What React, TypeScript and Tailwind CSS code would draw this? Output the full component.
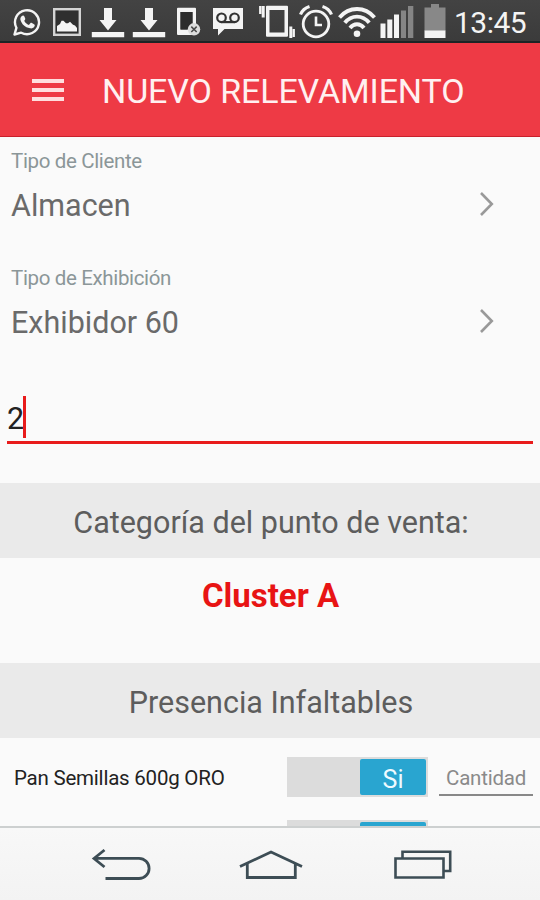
import React, { useState } from 'react'

const StatusBar = () => {
  return (
    <div className="flex h-[43px] shrink-0 items-start border-b-2 border-[#1c2425] bg-linear-to-b from-[#434343] to-[#3b3b3b] text-[#f4f4f4]">
      {/* WhatsApp */}
      <svg className="ml-[13px] mt-2 h-7 w-7 shrink-0" viewBox="0 0 28 28" fill="none">
        <path
          d="M1.5 26.5 3.4 19.8A12 12 0 1 1 8.2 24.7Z"
          stroke="currentColor"
          strokeWidth="2.4"
          strokeLinejoin="round"
        />
        <path
          d="M8.6 8.2c1.2-1.3 2.3-.9 2.8.3l.8 2c.3.8-.2 1.4-1 2.2 1.1 2.1 2.5 3.3 4.7 4.2l1.4-1.6c.5-.6 1-.5 1.6-.2l2.1 1.1c1 .5.9 1 .5 2.1-.6 1.6-2.6 2.4-4.4 2-5.4-1.2-8.4-4.3-9.6-8.4-.4-1.4.1-2.7 1.1-3.7Z"
          fill="currentColor"
        />
      </svg>
      {/* Gallery */}
      <svg className="ml-3 mt-[7px] h-[30px] w-7 shrink-0" viewBox="0 0 28 30" fill="none">
        <rect x="1.2" y="2.2" width="25.6" height="25.6" fill="#2f2f2f" stroke="#d4d4d4" strokeWidth="2.4" />
        <path d="M4 24.5V19l3-2 1.5-3.2h2l2.5 2.5h2l2-1.5 3 3 2 .7 2 2.500v3.5Z" fill="currentColor" />
      </svg>
      <Download className="ml-[10px]" />
      <Download className="ml-[7px]" />
      {/* Phone with error */}
      <svg className="ml-[11px] mt-[7px] h-[30px] w-[26px] shrink-0" viewBox="0 0 26 30" fill="none">
        <path
          fillRule="evenodd"
          d="M1 .8h17a1 1 0 0 1 1 1V27a1 1 0 0 1-1 1H1a1 1 0 0 1-1-1V1.8a1 1 0 0 1 1-1ZM3.500 5v17.5h12V5Z"
          fill="currentColor"
        />
        <rect x="3.5" y="5" width="12" height="17.5" fill="#2c2c2c" />
        <circle cx="17" cy="22.3" r="6.2" fill="#ddd" />
        <path d="m14.3 19.6 5.4 5.4m0-5.4-5.4 5.4" stroke="#4b4b4b" strokeWidth="1.5" />
      </svg>
      {/* Voicemail */}
      <svg className="ml-[9px] mt-[7px] h-[30px] w-8 shrink-0" viewBox="0 0 32 30" fill="none">
        <path d="M1 1h30v21H12.5L6 28.5V22H1Z" fill="currentColor" />
        <g stroke="#333" strokeWidth="2.2">
          <circle cx="9.5" cy="10.8" r="4.3" />
          <circle cx="22.5" cy="10.8" r="4.3" />
          <path d="M9.5 15.1h13" />
        </g>
      </svg>
      {/* Vibrate */}
      <svg className="ml-[15px] mt-[5px] h-[34px] w-[37px] shrink-0" viewBox="0 0 37 34" fill="none">
        <path
          fillRule="evenodd"
          d="M8 .8h20a1 1 0 0 1 1 1v29a1 1 0 0 1-1 1H8a1 1 0 0 1-1-1v-29a1 1 0 0 1 1-1ZM10.5 5v22.5h15V5Z"
          fill="currentColor"
        />
        <path d="M4.2 1v11.5M31.8 21.5V33" stroke="currentColor" strokeWidth="3" />
        <path d="M1.3 1v8M34.7 24v8" stroke="currentColor" strokeWidth="2.4" />
      </svg>
      {/* Alarm */}
      <svg className="ml-[3px] mt-1 h-[35px] w-[34px] shrink-0" viewBox="0 0 34 35" fill="none" stroke="currentColor">
        <circle cx="17" cy="20" r="12.8" strokeWidth="2.8" />
        <path d="M17 12.5V21h6" strokeWidth="2.6" />
        <path d="M1.5 10.5Q4 4.5 10.5 2.5M32.5 10.5Q30 4.5 23.5 2.5" strokeWidth="3.2" />
      </svg>
      {/* Wifi */}
      <svg className="ml-[5px] mt-[6px] h-8 w-[38px] shrink-0" viewBox="0 0 38 32" fill="none" stroke="currentColor">
        <path d="M1.5 11.5C11 .2 27 .2 36.5 11.5" strokeWidth="3.8" />
        <path d="M6.8 16.8C13.5 8.5 24.5 8.5 31.2 16.8" strokeWidth="3.8" />
        <path d="M12 22c3.8-5 10.2-5 14 0" strokeWidth="3.8" />
        <circle cx="19" cy="27.8" r="3.3" fill="currentColor" stroke="none" />
      </svg>
      {/* Signal */}
      <svg className="ml-[4px] mt-[5px] h-[33px] w-[34px] shrink-0" viewBox="0 0 34 33">
        <path d="M.5 18.5h5V33h-5ZM7.3 14.5h5V33h-5ZM14 9.5h5V33h-5Z" fill="currentColor" />
        <path d="M21 5.5h5V33h-5ZM28 1h5.3V33H28Z" fill="#858585" />
      </svg>
      {/* Battery */}
      <svg className="ml-[10px] mt-1 h-[34px] w-[22px] shrink-0" viewBox="0 0 22 34">
        <path d="M7 0h8v3.5h6.5V27H.5V3.5H7Z" fill="#888" />
        <path d="M.5 26.5h21V34H.5Z" fill="currentColor" />
      </svg>
      <p className="ml-[8px] mt-[3px] text-[30px] leading-10 tracking-[-0.5px] whitespace-nowrap">13:45</p>
    </div>
  )
}

const Download = ({ className }: { className: string }) => (
  <svg className={`mt-[7px] h-[31px] w-[34px] shrink-0 ${className}`} viewBox="0 0 34 31" fill="currentColor">
    <path d="M13 1h8v12h4.5L17 23.5 8.5 13H13ZM.8 25h32.4v5.2H.8Z" />
  </svg>
)

const Chevron = () => (
  <svg className="h-7 w-4" viewBox="0 0 16 28" fill="none">
    <path d="m2 3 10.8 11L2 25" stroke="#999" strokeWidth="2.6" />
  </svg>
)

const SelectField = ({ label, value }: { label: string; value: string }) => {
  return (
    <div className="h-[117px] shrink-0 pl-[11px] pr-[45px] pt-[11px]">
      <p className="text-[20.5px] leading-[26px] tracking-[-0.35px] text-[#8b9698]">{label}</p>
      <div className="mt-[10px] flex items-center justify-between">
        <p className="text-[30.5px] leading-[44px] text-[#6a6a6a]">{value}</p>
        <div className="-mt-1">
          <Chevron />
        </div>
      </div>
    </div>
  )
}

const SectionTitle = ({ children }: { children: React.ReactNode }) => (
  <div className="flex h-[75px] shrink-0 items-center justify-center bg-[#eaeaea] pt-[5px] pl-[2px]">
    <h2 className="text-[30.5px] leading-9 whitespace-nowrap text-[#5d5d5d]">{children}</h2>
  </div>
)

const Toggle = ({ label }: { label?: string }) => (
  <div className="flex h-10 w-[141px] justify-end bg-[#dcdcdc] p-0.5">
    <div className="flex h-9 w-[66px] items-center justify-center rounded-xs bg-[#29a5d0] pt-1 text-[25px] leading-none text-[#eefaff]">
      {label}
    </div>
  </div>
)

const ProductRow = ({ name }: { name: string }) => {
  return (
    <div className="flex h-[63px] shrink-0 items-start pl-[14px]">
      <p className="w-[273px] pt-2 text-[20.5px] leading-[26px] tracking-[-0.22px] text-[#222]">{name}</p>
      <Toggle label="Si" />
      <div className="ml-[11px] h-[39px] w-[94px] border-b-2 border-[#888] pl-[7px] pt-2 text-[20.5px] leading-[26px] tracking-[-0.2px] text-[#8a8a8a]">
        Cantidad
      </div>
    </div>
  )
}

const NavBar = () => {
  return (
    <div className="flex h-[74px] shrink-0 items-start border-t-2 border-[#cdd0d0] bg-linear-to-b from-[#f8f8f8] to-[#f3f3f3] text-[#3d4d55]">
      {/* Back */}
      <svg className="ml-[91px] mt-5 h-9 w-[62px]" viewBox="0 0 62 36" fill="none" stroke="currentColor" strokeWidth="2.8">
        <path d="M13.5 2 3 10.5l10.5 8.5M3 10.3h45a10 10 0 0 1 0 20.2H14.5" />
      </svg>
      {/* Home */}
      <svg className="ml-[86px] mt-5 h-9 w-[68px]" viewBox="0 0 68 36" fill="none" stroke="currentColor" strokeWidth="2.8">
        <path d="M1 18.5 32 4 63 18.5M8.3 15.5v14h48v-14" />
      </svg>
      {/* Recent apps */}
      <svg className="ml-[85px] mt-5 h-9 w-[62px]" viewBox="0 0 62 36" fill="none" stroke="currentColor" strokeWidth="2.6">
        <path d="M10.5 10.5V3.8h47.7V23h-7M3.500 10.5h48v19h-48Z" />
      </svg>
    </div>
  )
}

export default function App() {
  const [quantity] = useState('2')

  return (
    <div className="flex h-[900px] w-[540px] flex-col overflow-hidden bg-[#fafafa] font-[Roboto,sans-serif]">
      <StatusBar />

      <header className="flex h-[94px] shrink-0 items-center border-b border-[#c8202b] bg-[#ee3a45] pl-8">
        <div className="mt-px flex w-8 flex-col gap-[5px]">
          <span className="h-1 bg-[#ffdede]" />
          <span className="h-1 bg-[#ffdede]" />
          <span className="h-1 bg-[#ffdede]" />
        </div>
        <h1 className="ml-[38px] mt-[3px] text-[34px] leading-10 tracking-[-0.12px] whitespace-nowrap text-[#fff0f0]">
          NUEVO RELEVAMIENTO
        </h1>
      </header>

      <main className="flex min-h-0 flex-1 flex-col overflow-hidden">
        <SelectField label="Tipo de Cliente" value="Almacen" />
        <SelectField label="Tipo de Exhibición" value="Exhibidor 60" />

        <div className="mx-[7px] mt-[25px] mb-[39px] flex h-12 shrink-0 items-start border-b-3 border-[#e81b1b]">
          <p className="pt-[3px] text-[30.5px] leading-10 text-[#222]">{quantity}</p>
          <span className="-ml-px h-[42px] w-[3px] bg-[#e81b1b]" />
        </div>

        <SectionTitle>Categoría del punto de venta:</SectionTitle>
        <p className="h-[105px] shrink-0 pt-[18px] pl-px text-center text-[33px] leading-10 font-bold text-[#e81414]">
          Cluster A
        </p>

        <SectionTitle>Presencia Infaltables</SectionTitle>
        <div className="flex flex-col pt-[19px]">
          <ProductRow name="Pan Semillas 600g ORO" />
          {/* next row, mostly under the navigation bar */}
          <div className="pl-[287px]">
            <Toggle />
          </div>
        </div>
      </main>

      <NavBar />
    </div>
  )
}
